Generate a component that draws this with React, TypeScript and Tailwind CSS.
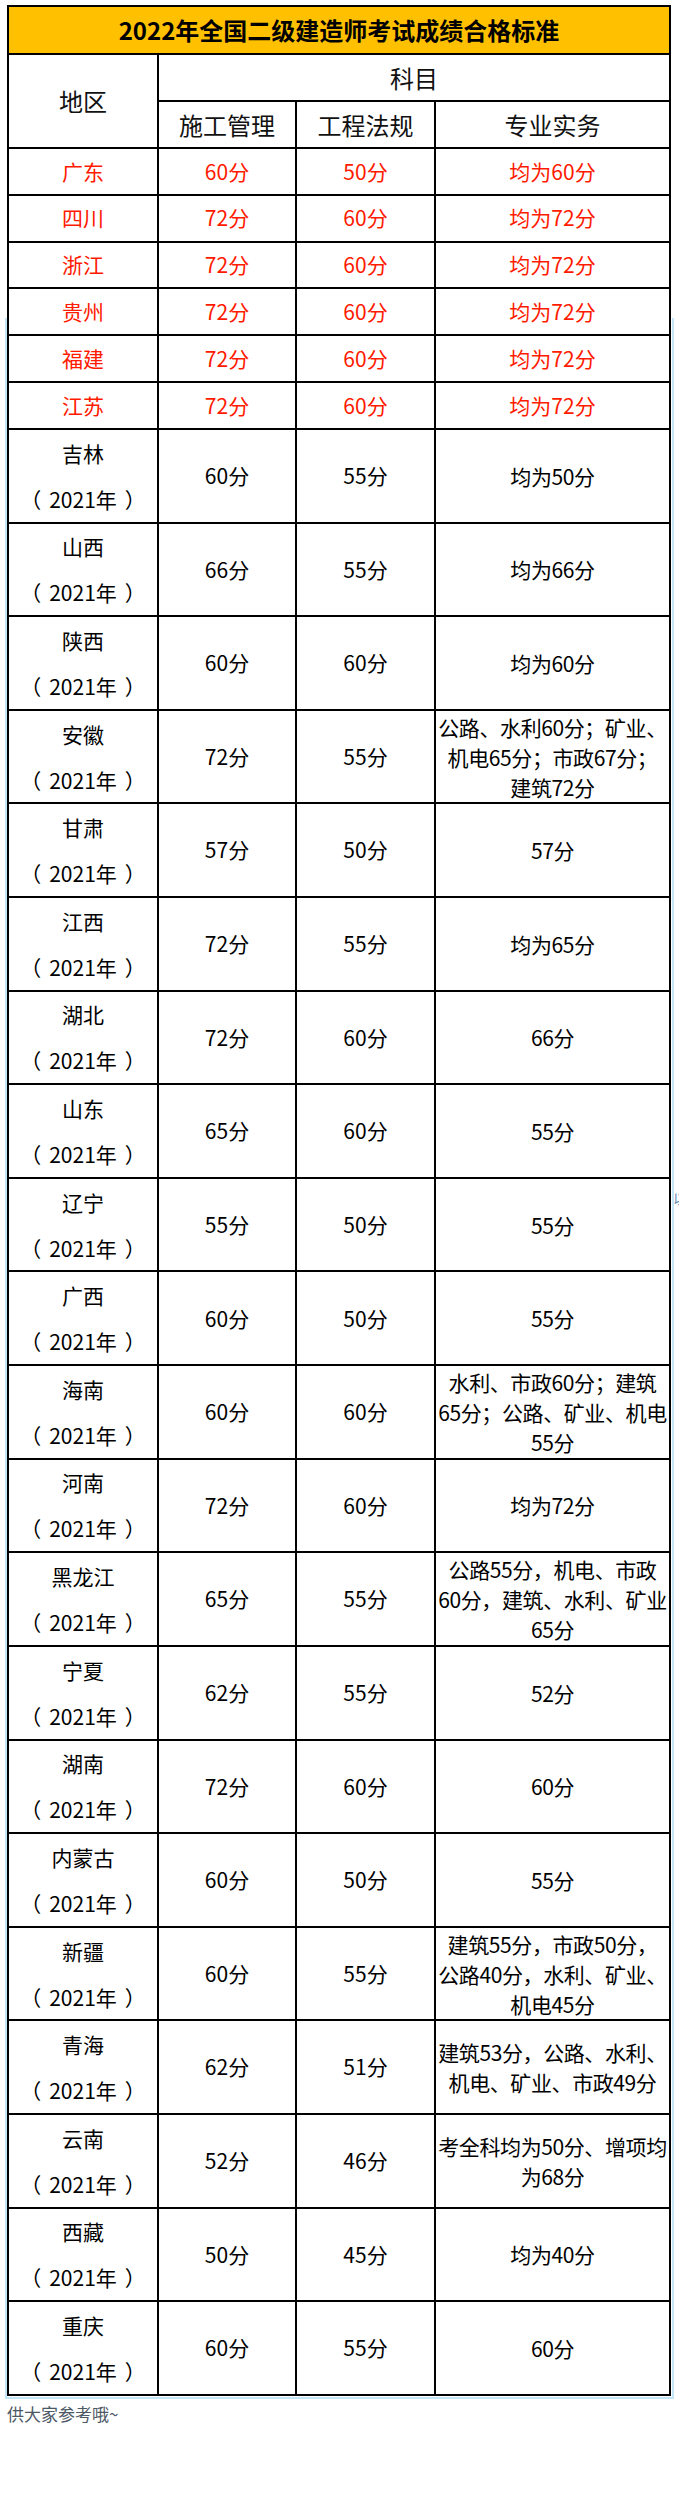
import React from "react";

const FONT = '"Noto Sans CJK SC", "Noto Sans", sans-serif';

const redRows: [string, string, string, string][] = [
  ["广东", "60分", "50分", "均为60分"],
  ["四川", "72分", "60分", "均为72分"],
  ["浙江", "72分", "60分", "均为72分"],
  ["贵州", "72分", "60分", "均为72分"],
  ["福建", "72分", "60分", "均为72分"],
  ["江苏", "72分", "60分", "均为72分"],
];

const rows: { r: string; a: string; b: string; c: string[] }[] = [
  { r: "吉林", a: "60分", b: "55分", c: ["均为50分"] },
  { r: "山西", a: "66分", b: "55分", c: ["均为66分"] },
  { r: "陕西", a: "60分", b: "60分", c: ["均为60分"] },
  { r: "安徽", a: "72分", b: "55分", c: ["公路、水利60分；矿业、", "机电65分；市政67分；", "建筑72分"] },
  { r: "甘肃", a: "57分", b: "50分", c: ["57分"] },
  { r: "江西", a: "72分", b: "55分", c: ["均为65分"] },
  { r: "湖北", a: "72分", b: "60分", c: ["66分"] },
  { r: "山东", a: "65分", b: "60分", c: ["55分"] },
  { r: "辽宁", a: "55分", b: "50分", c: ["55分"] },
  { r: "广西", a: "60分", b: "50分", c: ["55分"] },
  { r: "海南", a: "60分", b: "60分", c: ["水利、市政60分；建筑", "65分；公路、矿业、机电", "55分"] },
  { r: "河南", a: "72分", b: "60分", c: ["均为72分"] },
  { r: "黑龙江", a: "65分", b: "55分", c: ["公路55分，机电、市政", "60分，建筑、水利、矿业", "65分"] },
  { r: "宁夏", a: "62分", b: "55分", c: ["52分"] },
  { r: "湖南", a: "72分", b: "60分", c: ["60分"] },
  { r: "内蒙古", a: "60分", b: "50分", c: ["55分"] },
  { r: "新疆", a: "60分", b: "55分", c: ["建筑55分，市政50分，", "公路40分，水利、矿业、", "机电45分"] },
  { r: "青海", a: "62分", b: "51分", c: ["建筑53分，公路、水利、", "机电、矿业、市政49分"] },
  { r: "云南", a: "52分", b: "46分", c: ["考全科均为50分、增项均", "为68分"] },
  { r: "西藏", a: "50分", b: "45分", c: ["均为40分"] },
  { r: "重庆", a: "60分", b: "55分", c: ["60分"] },
];

const cell = "flex items-center justify-center text-center overflow-hidden";

export default function App() {
  return (
    <div
      className="relative w-[679px] h-[2519px] overflow-hidden bg-white"
      style={{ fontFamily: FONT }}
    >
      <div className="pt-[5px] pl-[7px]">
        <div className="grid w-[664px] bg-black p-[2px] gap-[2px] grid-cols-[148px_136px_137px_233px] grid-rows-[46px_45px_45px_repeat(6,44.83px)_repeat(21,91.62px)]">
          <div className={`${cell} col-span-4 bg-[#ffc000] text-[24px] font-bold text-black`}>
            2022年全国二级建造师考试成绩合格标准
          </div>
          <div className={`${cell} bg-white row-span-2 text-[24px] text-[#111]`}>地区</div>
          <div className={`${cell} bg-white col-span-3 text-[24px] text-[#111]`}>科目</div>
          <div className={`${cell} bg-white text-[24px] text-[#111]`}>施工管理</div>
          <div className={`${cell} bg-white text-[24px] text-[#111]`}>工程法规</div>
          <div className={`${cell} bg-white text-[24px] text-[#111]`}>专业实务</div>

          {redRows.map((row) => (
            <React.Fragment key={row[0]}>
              {row.map((t, i) => (
                <div key={i} className={`${cell} bg-white text-[21px] text-[#ff1a00]`}>
                  {t}
                </div>
              ))}
            </React.Fragment>
          ))}

          {rows.map((row) => (
            <React.Fragment key={row.r}>
              <div className={`${cell} bg-white flex-col text-[21px] leading-[46px] text-black`}>
                <span>{row.r}</span>
                <span className="whitespace-nowrap">
                  <span className="mr-[8px]">（</span>2021年<span className="ml-[8px]">）</span>
                </span>
              </div>
              <div className={`${cell} bg-white text-[21px] text-black`}>{row.a}</div>
              <div className={`${cell} bg-white text-[21px] text-black`}>{row.b}</div>
              <div className={`${cell} bg-white flex-col text-[21px] leading-[30px] tracking-[-0.4px] text-black`}>
                {row.c.map((l, i) => (
                  <span key={i} className="whitespace-nowrap">
                    {l}
                  </span>
                ))}
              </div>
            </React.Fragment>
          ))}
        </div>
        <div className="mt-[5px] text-[17px] leading-[26px] text-[#4d5866]">供大家参考哦~</div>
      </div>

      {/* light blue frame around lower part of the table */}
      <div className="pointer-events-none absolute left-[5px] top-[318px] w-[669px] h-[2081px] border-l-2 border-r-2 border-b-2 border-[#c3e6f7]" />
      {/* clipped glyph at the right edge */}
      <div className="absolute left-[673px] top-[1188px] text-[14px] leading-[20px] text-[#6b8db3]">以</div>
    </div>
  );
}
